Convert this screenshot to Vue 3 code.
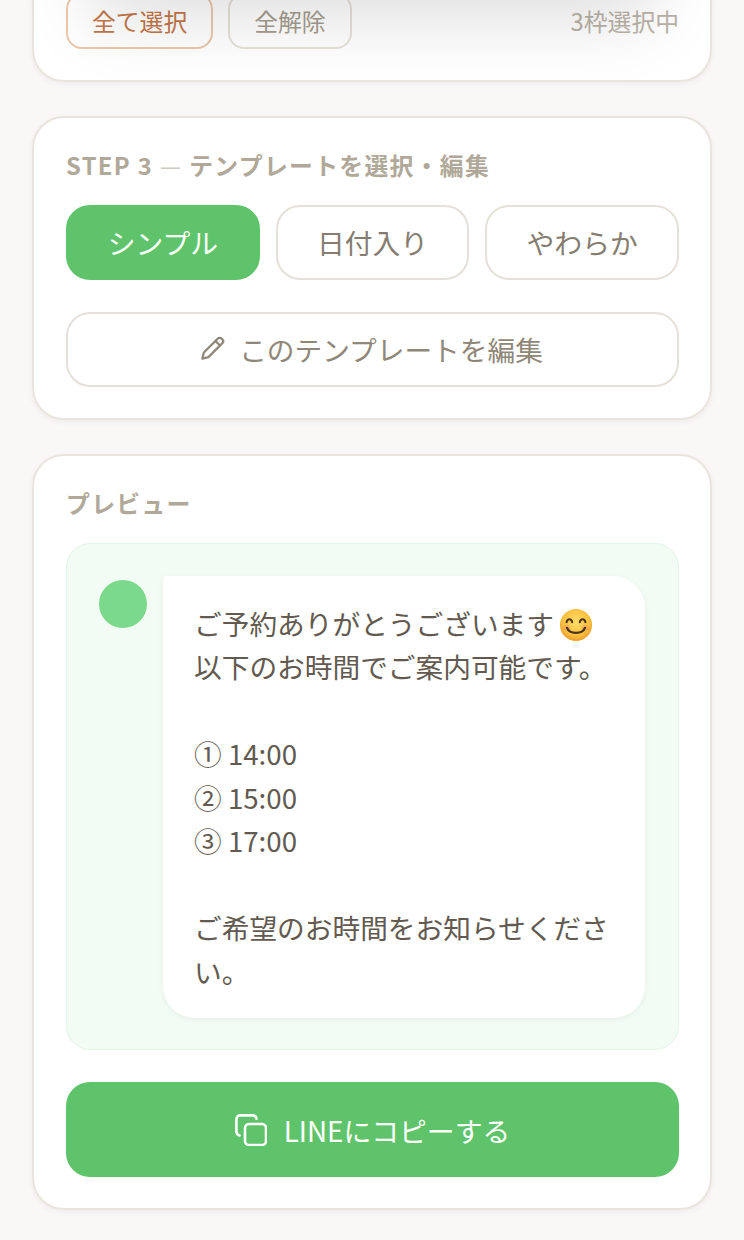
<template>
  <div class="page">
    <!-- 上に固定されたヘッダーの影 -->
    <div class="top-shade"></div>

    <section class="card card-first">
      <div class="select-row">
        <button class="mini-btn mini-btn-accent">全て選択</button>
        <button class="mini-btn">全解除</button>
        <span class="select-count">3枠選択中</span>
      </div>
    </section>

    <section class="card">
      <h3 class="card-title">STEP 3 <span class="dash">—</span> テンプレートを選択・編集</h3>
      <div class="tabs">
        <button
          v-for="tab in tabs"
          :key="tab"
          class="tab"
          :class="{ active: tab === activeTab }"
          @click="activeTab = tab"
        >{{ tab }}</button>
      </div>
      <button class="edit-btn">
        <svg viewBox="0 0 24 24" fill="none" xmlns="http://www.w3.org/2000/svg">
          <path d="M3 21L4.3 15.6L16.6 3.3C17.6 2.3 19.2 2.3 20.2 3.3L20.7 3.8C21.7 4.8 21.7 6.4 20.7 7.4L8.4 19.7L3 21Z" stroke="currentColor" stroke-width="2" stroke-linecap="round" stroke-linejoin="round"/>
          <path d="M14.6 5.3L18.7 9.4" stroke="currentColor" stroke-width="2" stroke-linecap="round"/>
        </svg>
        このテンプレートを編集
      </button>
    </section>

    <section class="card">
      <h3 class="card-title preview-title">プレビュー</h3>
      <div class="preview">
        <div class="avatar"></div>
        <div class="bubble">
          <div>ご予約ありがとうございます<svg class="emoji" viewBox="0 0 36 36" xmlns="http://www.w3.org/2000/svg">
            <defs>
              <radialGradient id="face" cx="50%" cy="42%" r="58%">
                <stop offset="0%" stop-color="#ffdd67"/>
                <stop offset="70%" stop-color="#fbc13f"/>
                <stop offset="100%" stop-color="#ee9a2e"/>
              </radialGradient>
            </defs>
            <circle cx="18" cy="18" r="17" fill="url(#face)"/>
            <ellipse cx="8" cy="21" rx="4" ry="3" fill="#f58f5c" opacity="0.45"/>
            <ellipse cx="28" cy="21" rx="4" ry="3" fill="#f58f5c" opacity="0.45"/>
            <path d="M8 15C9 11 13 11 14 15M22 15C23 11 27 11 28 15" stroke="#4a3320" stroke-width="2.2" fill="none" stroke-linecap="round"/>
            <path d="M8.5 21C11 28 25 28 27.5 21" stroke="#4a3320" stroke-width="2.4" fill="none" stroke-linecap="round"/>
          </svg></div>
          <div>以下のお時間でご案内可能です。</div>
          <div class="blank"></div>
          <div v-for="slot in slots" :key="slot">{{ slot }}</div>
          <div class="blank"></div>
          <div>ご希望のお時間をお知らせください。</div>
        </div>
      </div>
      <button class="copy-btn">
        <svg viewBox="0 0 32 32" fill="none" xmlns="http://www.w3.org/2000/svg">
          <rect x="10" y="10" width="21" height="21" rx="4" stroke="currentColor" stroke-width="2.6"/>
          <path d="M4.6 21.5C2.6 21 1.4 19.6 1.4 17.6V5.4C1.4 3 3 1.4 5.4 1.4H17.6C19.6 1.4 21 2.6 21.5 4.6" stroke="currentColor" stroke-width="2.6" stroke-linecap="round"/>
        </svg>
        LINEにコピーする
      </button>
    </section>
  </div>
</template>

<script setup>
import { ref } from 'vue'

const tabs = ['シンプル', '日付入り', 'やわらか']
const activeTab = ref('シンプル')
const slots = ['① 14:00', '② 15:00', '③ 17:00']
</script>

<style scoped>
.page {
  position: relative;
  height: 1240px;
  overflow: hidden;
  box-sizing: border-box;
  padding: 0 32px;
  display: flex;
  flex-direction: column;
  gap: 34px;
  background: #f9f8f6;
  font-family: "Noto Sans CJK JP", "Noto Sans", sans-serif;
}

.top-shade {
  position: absolute;
  top: -60px;
  left: 110px;
  right: 110px;
  height: 60px;
  box-shadow: 0 0 70px 20px rgba(0, 0, 0, 0.13);
  z-index: 2;
}

.card {
  background: #fff;
  border: 2px solid #e9e5de;
  border-radius: 32px;
  padding: 31px 31px 31px 32px;
  box-shadow: 0 2px 6px rgba(0, 0, 0, 0.05);
  flex-shrink: 0;
}

.card-first {
  margin-top: -40px;
}

.select-row {
  display: flex;
  align-items: center;
  gap: 15px;
}

.mini-btn {
  height: 56px;
  padding: 0 24px 2px;
  border: 2px solid #e5e1da;
  border-radius: 16px;
  background: #fff;
  color: #a59d8f;
  font-family: inherit;
  font-size: 23.8px;
}

.mini-btn-accent {
  border-color: #ecc7aa;
  color: #c4764a;
}

.select-count {
  margin-left: auto;
  margin-bottom: 2px;
  color: #bab3a7;
  font-size: 23.8px;
}

.card-title {
  margin: -1px 0 23px;
  color: #b0a898;
  font-size: 23.8px;
  font-weight: 700;
  line-height: 34px;
  letter-spacing: 0.056em;
}

.dash {
  font-weight: 400;
  color: #cfc9bf;
}

.tabs {
  display: grid;
  grid-template-columns: repeat(3, 1fr);
  gap: 16px;
}

.tab {
  height: 75px;
  padding: 0 0 2px;
  border: 2px solid #e5e1da;
  border-radius: 24px;
  background: #fff;
  color: #857d70;
  font-family: inherit;
  font-size: 27.8px;
}

.tab.active {
  background: #5fc36b;
  border-color: #5fc36b;
  color: #fff;
}

.edit-btn {
  width: 100%;
  height: 75px;
  margin-top: 32px;
  padding: 0 3px 2px 0;
  display: flex;
  align-items: center;
  justify-content: center;
  gap: 13px;
  border: 2px solid #e5e1da;
  border-radius: 24px;
  background: #fff;
  color: #8f8778;
  font-family: inherit;
  font-size: 27.7px;
}

.edit-btn svg {
  width: 27px;
  height: 27px;
}

.preview {
  display: flex;
  align-items: flex-start;
  gap: 16px;
  padding: 32px 33px 31px 32px;
  background: #f2fcf4;
  border: 1px solid #e2f5e6;
  border-radius: 24px;
}

.card-title.preview-title {
  margin-bottom: 23px;
}

.avatar {
  width: 48px;
  height: 48px;
  margin-top: 4px;
  border-radius: 50%;
  background: #7ad98a;
  flex-shrink: 0;
}

.bubble {
  flex: 1;
  min-width: 0;
  padding: 26px 33px 25px 31px;
  background: #fff;
  border-radius: 4px 32px 32px 32px;
  box-shadow: 0 2px 6px rgba(0, 0, 0, 0.05);
  color: #625a50;
  font-size: 27.7px;
  line-height: 43.45px;
}

.blank {
  height: 43.45px;
}

.emoji {
  width: 34px;
  height: 34px;
  margin-left: 5px;
  vertical-align: -7px;
}

.copy-btn {
  width: 100%;
  height: 95px;
  margin-top: 32px;
  padding: 0;
  display: flex;
  align-items: center;
  justify-content: center;
  gap: 17px;
  border: none;
  border-radius: 24px;
  background: #5fc36b;
  color: #fff;
  font-family: inherit;
  font-size: 27.8px;
  font-weight: 400;
}

.copy-btn svg {
  width: 32px;
  height: 32px;
}
</style>
